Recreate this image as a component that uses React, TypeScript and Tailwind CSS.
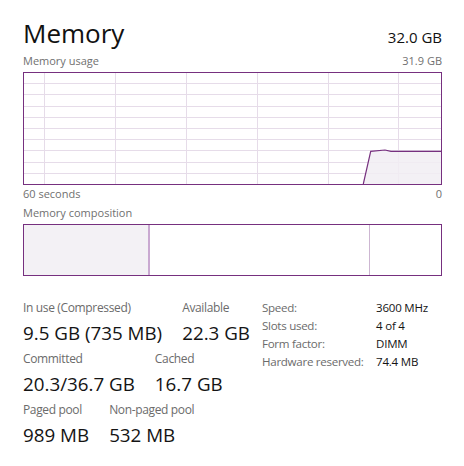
import React from "react";

const FONT = { fontFamily: '"Open Sans", "Noto Sans", sans-serif' };

function UsageGraph() {
  const hLines = [1, 2, 3, 4, 5, 6, 7, 8, 9].map((k) => 10.2 + 11.2 * (k - 1));
  const vLines = [20.3, 91.3, 162.3, 233.3, 304.3, 374.3];
  return (
    <div className="h-[113px] w-[419px] border border-[#76307f] bg-white">
      <svg width="417" height="111" viewBox="0 0 417 111" className="block">
        {hLines.map((y, i) => (
          <line key={"h" + i} x1="0" x2="417" y1={Math.round(y) + 0.5} y2={Math.round(y) + 0.5} stroke="#e6dce9" strokeWidth="1" />
        ))}
        {vLines.map((x, i) => (
          <line key={"v" + i} y1="0" y2="111" x1={Math.round(x) + 0.5} x2={Math.round(x) + 0.5} stroke="#e6dce9" strokeWidth="1" />
        ))}
        <polygon points="339.3,111 346.7,78.3 361,77 367,78.3 418,78.3 418,111" fill="#f1edf3" fillOpacity="0.85" />
        <polyline points="339.3,111 346.7,78.3 361,77 367,78.3 418,78.3" fill="none" stroke="#76307f" strokeWidth="1.2" />
      </svg>
    </div>
  );
}

function Composition() {
  return (
    <div className="flex h-[52px] w-[419px] border border-[#76307f] bg-white">
      <div className="w-[124px] bg-[#f3f1f5]" />
      <div className="w-[2px] bg-[#c9a9d1]" />
      <div className="w-[219px] bg-white" />
      <div className="w-[1px] bg-[#cdb6d2]" />
      <div className="flex-1 bg-white" />
    </div>
  );
}

function Stat({ label, value }: { label: string; value: string }) {
  return (
    <div className="flex flex-col">
      <div className="text-[12px] leading-[16px] tracking-[-0.35px] text-[#6b6b6b]">{label}</div>
      <div className="mt-[5px] text-[18.8px] leading-[24px] text-[#141414]">{value}</div>
    </div>
  );
}

export default function App() {
  const props: [string, string][] = [
    ["Speed:", "3600 MHz"],
    ["Slots used:", "4 of 4"],
    ["Form factor:", "DIMM"],
    ["Hardware reserved:", "74.4 MB"],
  ];
  return (
    <div className="h-[466px] w-[464px] overflow-hidden bg-white pl-[23px] pr-[22px] pt-[18px]" style={FONT}>
      <div className="flex h-[30px] items-start justify-between">
        <div className="text-[26px] leading-[30px] text-[#111]">Memory</div>
        <div className="mt-[9.3px] text-[15px] leading-[20px] text-[#111]">32.0 GB</div>
      </div>
      <div className="mt-[6px] mb-[4px] flex justify-between text-[11px] leading-[14px] text-[#707070]">
        <span>Memory usage</span>
        <span>31.9 GB</span>
      </div>
      <UsageGraph />
      <div className="mt-[2px] flex justify-between text-[11px] leading-[14px] text-[#707070]">
        <span>60 seconds</span>
        <span>0</span>
      </div>
      <div className="mt-[5px] text-[11px] leading-[14px] text-[#707070]">Memory composition</div>
      <div className="mt-[4px]">
        <Composition />
      </div>
      <div className="mt-[24px] flex">
        <div className="flex w-[239px] flex-col gap-[6px]">
          <div className="flex gap-[20px]">
            <Stat label="In use (Compressed)" value="9.5 GB (735 MB)" />
            <Stat label="Available" value="22.3 GB" />
          </div>
          <div className="flex gap-[20px]">
            <Stat label="Committed" value="20.3/36.7 GB" />
            <Stat label="Cached" value="16.7 GB" />
          </div>
          <div className="flex gap-[20px]">
            <Stat label="Paged pool" value="989 MB" />
            <Stat label="Non-paged pool" value="532 MB" />
          </div>
        </div>
        <div className="-mt-[1px] flex flex-col">
          {props.map(([k, v]) => (
            <div key={k} className="flex h-[18px] items-center text-[11.6px] leading-[18px]">
              <span className="w-[114px] tracking-[-0.3px] text-[#6b6b6b]">{k}</span>
              <span className="text-[11.5px] tracking-[-0.2px] text-[#141414]">{v}</span>
            </div>
          ))}
        </div>
      </div>
    </div>
  );
}
